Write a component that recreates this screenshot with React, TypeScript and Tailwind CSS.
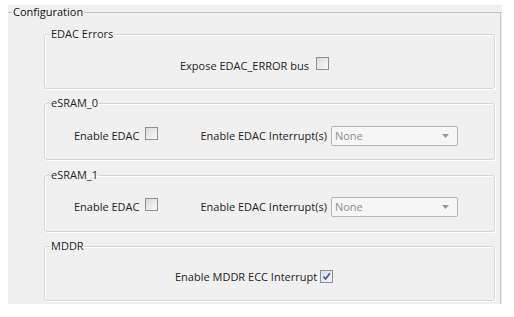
import React from "react";

function Check({ checked = false }: { checked?: boolean }) {
  return (
    <span
      className={
        "inline-flex h-[13px] w-[13px] items-center justify-center border border-[#8e8f8f] " +
        (checked
          ? "bg-gradient-to-br from-[#d8dff2] to-[#f4f6fc]"
          : "bg-gradient-to-br from-[#d9d9d9] to-[#fbfbfb]")
      }
    >
      {checked && (
        <svg width="9" height="9" viewBox="0 0 9 9">
          <path d="M1.5 4.5 L3.6 7 L7.8 1.2" fill="none" stroke="#3d4f9b" strokeWidth="1.6" />
        </svg>
      )}
    </span>
  );
}

function Select() {
  return (
    <div className="flex h-[20px] w-[127px] items-center justify-between rounded-[2px] border border-[#b4b4b4] bg-[#f6f6f6] pl-[3px] pr-[8px] text-[#8d8d8d]">
      <span>None</span>
      <svg width="7" height="4" viewBox="0 0 7 4">
        <path d="M0 0 H7 L3.5 4 Z" fill="#9a9a9a" />
      </svg>
    </div>
  );
}

function Group({
  title,
  className,
  children,
}: {
  title: string;
  className: string;
  children: React.ReactNode;
}) {
  return (
    <fieldset
      className={
        "ml-[36px] w-[451px] rounded-[3px] border border-[#d6d6d6] shadow-[inset_1px_1px_0_#ffffff,1px_1px_0_#ffffff] " +
        className
      }
    >
      <legend className="ml-[5px] h-[14px] px-[1px] leading-[14px] text-[#1e1e1e]">{title}</legend>
      {children}
    </fieldset>
  );
}

export default function App() {
  return (
    <div
      className="h-[317px] w-[514px] bg-white pl-[8px] pt-[5px] text-[11px] text-[#222]"
      style={{ fontFamily: '"Open Sans", "Liberation Sans", sans-serif' }}
    >
      <div className="h-[299px] w-[494px] bg-[#f0f0f0]">
        <fieldset className="h-[299px] w-[493px] border-t border-r border-[#c4c4c4] border-l-transparent border-b-transparent">
          <legend className="ml-[4px] h-[14px] px-[1px] leading-[14px] text-[#111]">Configuration</legend>
          <div className="flex flex-col pt-[8px]">
            <Group title="EDAC Errors" className="h-[62px]">
              <div className="mt-[15px] flex h-[20px] items-center pl-[135px]">
                <span>Expose EDAC_ERROR bus</span>
                <span className="ml-[7px]">
                  <Check />
                </span>
              </div>
            </Group>
            <Group title="eSRAM_0" className="mt-[7px] h-[64px]">
              <div className="mt-[16px] flex h-[20px] items-center pl-[29px]">
                <span>Enable EDAC</span>
                <span className="ml-[5px]">
                  <Check />
                </span>
                <span className="ml-[43px]">Enable EDAC Interrupt(s)</span>
                <span className="ml-[4px]">
                  <Select />
                </span>
              </div>
            </Group>
            <Group title="eSRAM_1" className="mt-[8px] h-[64px]">
              <div className="mt-[15px] flex h-[20px] items-center pl-[29px]">
                <span>Enable EDAC</span>
                <span className="ml-[5px]">
                  <Check />
                </span>
                <span className="ml-[43px]">Enable EDAC Interrupt(s)</span>
                <span className="ml-[4px]">
                  <Select />
                </span>
              </div>
            </Group>
            <Group title="MDDR" className="mt-[7px] h-[62px]">
              <div className="mt-[14px] flex h-[20px] items-center pl-[130px]">
                <span>Enable MDDR ECC Interrupt</span>
                <span className="ml-[3px]">
                  <Check checked />
                </span>
              </div>
            </Group>
          </div>
        </fieldset>
      </div>
    </div>
  );
}
